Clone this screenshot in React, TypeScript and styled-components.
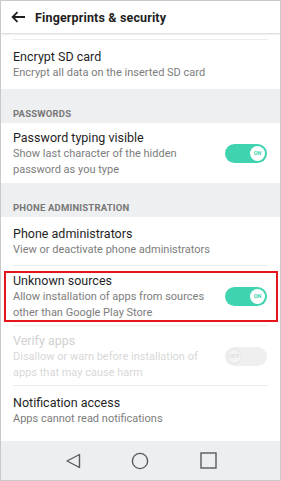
import React from "react";
import styled, { createGlobalStyle } from "styled-components";

const GlobalStyle = createGlobalStyle`
  html, body {
    margin: 0;
    padding: 0;
    background: #ffffff;
  }
  * {
    box-sizing: border-box;
  }
`;

const Frame = styled.div`
  width: 281px;
  height: 481px;
  border: 1px solid #c9c9c9;
  display: flex;
  flex-direction: column;
  overflow: hidden;
  background: #fff;
  font-family: Roboto, "Noto Sans", sans-serif;
`;

const Header = styled.header`
  height: 32px;
  flex-shrink: 0;
  display: flex;
  align-items: center;
  gap: 9px;
  padding-left: 10px;
  background: #fff;
  box-shadow: 0 1px 2px rgba(0, 0, 0, 0.18);
  position: relative;
  z-index: 1;
`;

const HeaderTitle = styled.h1`
  margin: 0;
  font-size: 12.5px;
  font-weight: 700;
  color: #1e1e1e;
  letter-spacing: 0.15px;
`;

const List = styled.div`
  flex: 1;
  display: flex;
  flex-direction: column;
`;

const TopStub = styled.div`
  height: 7px;
  margin: 0 12px;
  border-bottom: 1px solid #ececec;
`;

const Item = styled.div<{ $divider?: boolean; $tall?: boolean }>`
  position: relative;
  min-height: ${(p) => (p.$tall ? "60px" : "49px")};
  padding: 0 12px;
  display: flex;
  align-items: center;
  gap: 10px;
  &::after {
    content: "";
    display: ${(p) => (p.$divider ? "block" : "none")};
    position: absolute;
    left: 12px;
    right: 12px;
    bottom: 0;
    height: 1px;
    background: #ececec;
  }
`;

const ItemText = styled.div`
  flex: 1;
  display: flex;
  flex-direction: column;
`;

const ItemTitle = styled.div<{ $disabled?: boolean }>`
  font-size: 12.5px;
  line-height: 17px;
  color: ${(p) => (p.$disabled ? "#d0d0d0" : "#1f1f1f")};
`;

const ItemSub = styled.div<{ $disabled?: boolean; $narrow?: boolean }>`
  font-size: 11px;
  line-height: 16px;
  color: ${(p) => (p.$disabled ? "#d8d8d8" : "#7d7d7d")};
  max-width: ${(p) => (p.$narrow ? "196px" : "none")};
  white-space: ${(p) => (p.$narrow ? "normal" : "nowrap")};
`;

const SectionHeader = styled.div`
  height: 34px;
  background: #eeeff1;
  padding: 18px 12px 0;
  font-size: 9.5px;
  font-weight: 700;
  line-height: 14px;
  color: #777;
  letter-spacing: 0.2px;
`;

const Toggle = styled.div<{ $on: boolean }>`
  width: 42px;
  height: 19px;
  border-radius: 10px;
  flex-shrink: 0;
  margin-right: 1px;
  display: flex;
  align-items: center;
  justify-content: ${(p) => (p.$on ? "flex-end" : "flex-start")};
  padding: 0 2px;
  background: ${(p) => (p.$on ? "#3fd4af" : "#efefef")};
`;

const Knob = styled.div<{ $on: boolean }>`
  width: 15px;
  height: 15px;
  border-radius: 50%;
  background: ${(p) => (p.$on ? "#fff" : "#f4f4f4")};
  border: ${(p) => (p.$on ? "none" : "1px solid #e4e4e4")};
  display: flex;
  align-items: center;
  justify-content: center;
  font-size: 5.5px;
  font-weight: 700;
  color: ${(p) => (p.$on ? "#3fd4af" : "#dddddd")};
`;

const Highlight = styled.div`
  position: absolute;
  top: 5px;
  bottom: 4px;
  left: 3px;
  right: 2px;
  border: 2px solid #e8141b;
  pointer-events: none;
`;

const NavBar = styled.nav`
  height: 39px;
  flex-shrink: 0;
  background: #eceef1;
  display: grid;
  grid-template-columns: 1fr 1fr 1fr;
  align-items: center;
  justify-items: center;
  padding: 0 38px;
`;

const BackArrow = () => (
  <svg width="15" height="12" viewBox="0 0 15 12">
    <path
      d="M14 6H2M6.5 1.2L1.6 6l4.9 4.8"
      fill="none"
      stroke="#1e1e1e"
      strokeWidth="1.8"
    />
  </svg>
);

const Switch = ({ on }: { on: boolean }) => (
  <Toggle $on={on}>
    <Knob $on={on}>{on ? "ON" : "OFF"}</Knob>
  </Toggle>
);

export default function App() {
  return (
    <>
      <GlobalStyle />
      <Frame>
        <Header>
          <BackArrow />
          <HeaderTitle>Fingerprints &amp; security</HeaderTitle>
        </Header>
        <List>
          <TopStub />
          <Item>
            <ItemText>
              <ItemTitle>Encrypt SD card</ItemTitle>
              <ItemSub>Encrypt all data on the inserted SD card</ItemSub>
            </ItemText>
          </Item>
          <SectionHeader>PASSWORDS</SectionHeader>
          <Item $tall>
            <ItemText>
              <ItemTitle>Password typing visible</ItemTitle>
              <ItemSub $narrow>
                Show last character of the hidden password as you type
              </ItemSub>
            </ItemText>
            <Switch on />
          </Item>
          <SectionHeader>PHONE ADMINISTRATION</SectionHeader>
          <Item $divider>
            <ItemText>
              <ItemTitle>Phone administrators</ItemTitle>
              <ItemSub>View or deactivate phone administrators</ItemSub>
            </ItemText>
          </Item>
          <Item $tall $divider>
            <ItemText>
              <ItemTitle>Unknown sources</ItemTitle>
              <ItemSub $narrow>
                Allow installation of apps from sources other than Google Play
                Store
              </ItemSub>
            </ItemText>
            <Switch on />
            <Highlight />
          </Item>
          <Item $tall $divider>
            <ItemText>
              <ItemTitle $disabled>Verify apps</ItemTitle>
              <ItemSub $disabled $narrow>
                Disallow or warn before installation of apps that may cause
                harm
              </ItemSub>
            </ItemText>
            <Switch on={false} />
          </Item>
          <Item>
            <ItemText>
              <ItemTitle>Notification access</ItemTitle>
              <ItemSub>Apps cannot read notifications</ItemSub>
            </ItemText>
          </Item>
        </List>
        <NavBar>
          <svg width="16" height="16" viewBox="0 0 16 16">
            <path
              d="M14.5 1.5v13L2 8z"
              fill="none"
              stroke="#5a5a5a"
              strokeWidth="1.4"
              strokeLinejoin="round"
            />
          </svg>
          <svg width="18" height="18" viewBox="0 0 18 18">
            <circle
              cx="9"
              cy="9"
              r="7.6"
              fill="none"
              stroke="#5a5a5a"
              strokeWidth="1.4"
            />
          </svg>
          <svg width="17" height="17" viewBox="0 0 17 17">
            <rect
              x="1"
              y="1"
              width="15"
              height="15"
              fill="none"
              stroke="#5a5a5a"
              strokeWidth="1.4"
            />
          </svg>
        </NavBar>
      </Frame>
    </>
  );
}
